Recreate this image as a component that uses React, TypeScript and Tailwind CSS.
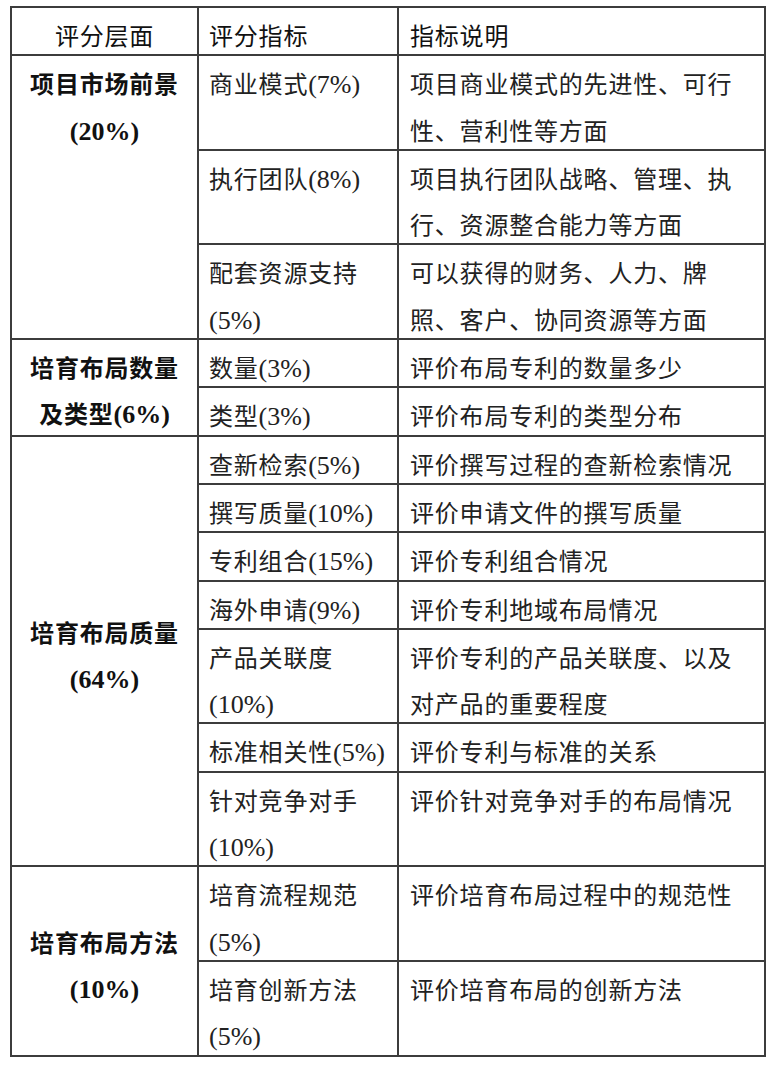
type Row = { name: string[]; desc: string[] };
type Group = { label: string[]; middle: boolean; rows: Row[] };

const groups: Group[] = [
  {
    label: ['项目市场前景', '(20%)'],
    middle: false,
    rows: [
      { name: ['商业模式(7%)'], desc: ['项目商业模式的先进性、可行', '性、营利性等方面'] },
      { name: ['执行团队(8%)'], desc: ['项目执行团队战略、管理、执', '行、资源整合能力等方面'] },
      { name: ['配套资源支持', '(5%)'], desc: ['可以获得的财务、人力、牌', '照、客户、协同资源等方面'] },
    ],
  },
  {
    label: ['培育布局数量', '及类型(6%)'],
    middle: false,
    rows: [
      { name: ['数量(3%)'], desc: ['评价布局专利的数量多少'] },
      { name: ['类型(3%)'], desc: ['评价布局专利的类型分布'] },
    ],
  },
  {
    label: ['培育布局质量', '(64%)'],
    middle: true,
    rows: [
      { name: ['查新检索(5%)'], desc: ['评价撰写过程的查新检索情况'] },
      { name: ['撰写质量(10%)'], desc: ['评价申请文件的撰写质量'] },
      { name: ['专利组合(15%)'], desc: ['评价专利组合情况'] },
      { name: ['海外申请(9%)'], desc: ['评价专利地域布局情况'] },
      { name: ['产品关联度', '(10%)'], desc: ['评价专利的产品关联度、以及', '对产品的重要程度'] },
      { name: ['标准相关性(5%)'], desc: ['评价专利与标准的关系'] },
      { name: ['针对竞争对手', '(10%)'], desc: ['评价针对竞争对手的布局情况'] },
    ],
  },
  {
    label: ['培育布局方法', '(10%)'],
    middle: true,
    rows: [
      { name: ['培育流程规范', '(5%)'], desc: ['评价培育布局过程中的规范性'] },
      { name: ['培育创新方法', '(5%)'], desc: ['评价培育布局的创新方法'] },
    ],
  },
];

// the scan's latin "(7%)" bits print a touch larger than the CJK glyphs
function Text({ s }: { s: string }) {
  const parts = s.split(/(\([^)]*\))/).filter(Boolean);
  return (
    <>
      {parts.map((p, i) =>
        p.startsWith('(') ? (
          <span key={i} className="text-[26px] tracking-normal">
            {p}
          </span>
        ) : (
          <span key={i}>{p}</span>
        )
      )}
    </>
  );
}

// each printed line is one fixed-height box; text sits a little low like the scan
function Lines({ lines }: { lines: string[] }) {
  return (
    <div>
      {lines.map((l) => (
        <div key={l} className="h-[46.3px] leading-[46.3px] whitespace-nowrap">
          <span className="relative top-[6px]">
            <Text s={l} />
          </span>
        </div>
      ))}
    </div>
  );
}

const line = 'border-2 border-[#3c3c3c] p-0';

export default function App() {
  return (
    <div className="min-h-[1068px] w-[773px] bg-white pt-[6px] pl-[10px] font-['Liberation_Serif','Noto_Sans_CJK_SC',serif] text-[24px] tracking-[0.8px] text-[#222]">
      <table className="w-[754px] table-fixed border-collapse">
        <colgroup>
          <col className="w-[187px]" />
          <col className="w-[200px]" />
          <col className="w-[367px]" />
        </colgroup>
        <thead>
          <tr>
            <th className={`${line} align-top text-center font-normal text-[#111]`}>
              <Lines lines={['评分层面']} />
            </th>
            <th className={`${line} align-top pl-[10px] text-left font-normal text-[#111]`}>
              <Lines lines={['评分指标']} />
            </th>
            <th className={`${line} align-top pl-[11px] text-left font-normal text-[#111]`}>
              <Lines lines={['指标说明']} />
            </th>
          </tr>
        </thead>
        <tbody>
          {groups.map((g) =>
            g.rows.map((r, i) => (
              <tr key={g.label[0] + r.name[0]}>
                {i === 0 && (
                  <td
                    rowSpan={g.rows.length}
                    className={`${line} text-center font-bold text-[#111] ${g.middle ? 'align-middle' : 'align-top'}`}
                  >
                    <Lines lines={g.label} />
                  </td>
                )}
                <td className={`${line} align-top pl-[10px]`}>
                  <Lines lines={r.name} />
                </td>
                <td className={`${line} align-top pl-[11px]`}>
                  <Lines lines={r.desc} />
                </td>
              </tr>
            ))
          )}
        </tbody>
      </table>
    </div>
  );
}
